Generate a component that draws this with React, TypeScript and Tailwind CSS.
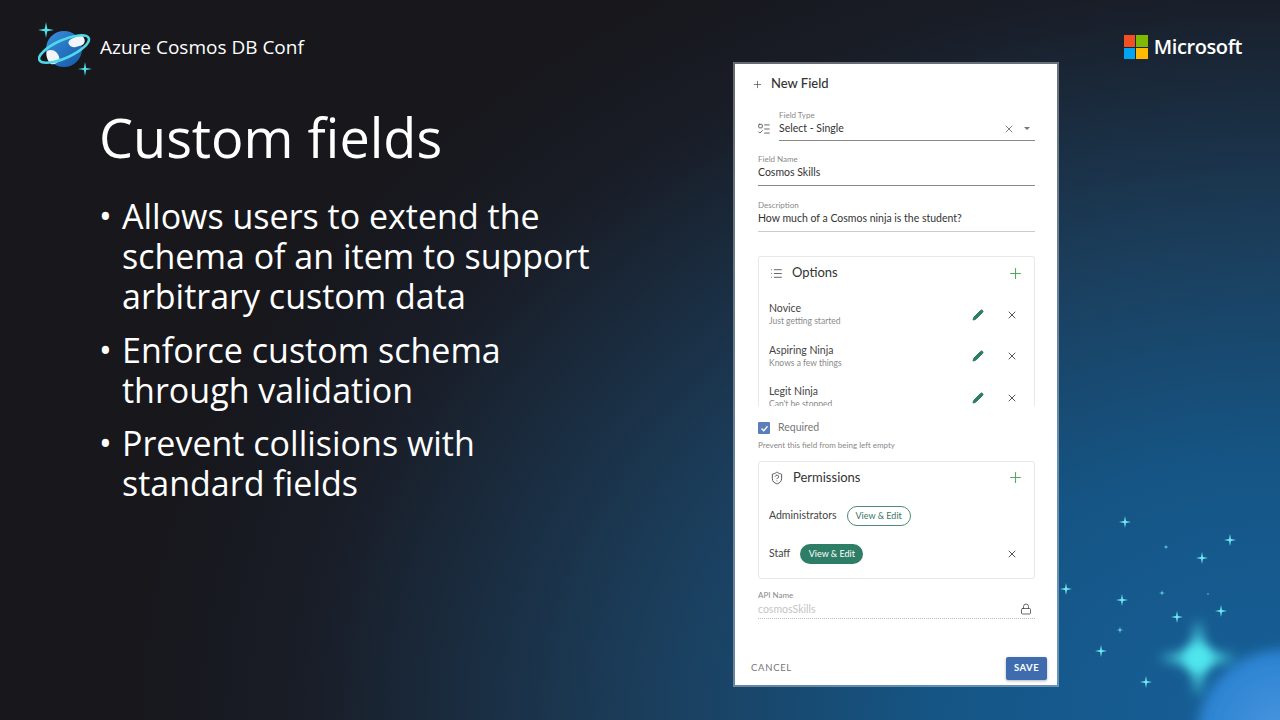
import { Lock, Pencil, Plus, ShieldQuestion, X, ListTodo, List } from "lucide-react"

const star = (x: number, y: number, r: number) => {
    const k = r * 0.16
    return `M${x} ${y - r}L${x + k} ${y - k}L${x + r} ${y}L${x + k} ${y + k}L${x} ${y + r}L${x - k} ${y + k}L${x - r} ${y}L${x - k} ${y - k}Z`
}

const stars = [
    [1125, 522, 6], [1166, 547, 2.5], [1230, 540, 6], [1202, 558, 6], [1066, 589, 6],
    [1122, 600, 6], [1162, 593, 3], [1208, 594, 1.5], [1221, 611, 6], [1177, 617, 6],
    [1120, 630, 3.5], [1101, 651, 6], [1146, 682, 6],
]

const CosmosLogo = () => (
    <svg width="62" height="62" viewBox="0 0 62 62" className="shrink-0">
        <defs>
            <linearGradient id="ball" x1="0" y1="0" x2="1" y2="1">
                <stop offset="0" stopColor="#3a8fdc" />
                <stop offset="1" stopColor="#1558a8" />
            </linearGradient>
        </defs>
        <circle cx="26" cy="27" r="18" fill="url(#ball)" />
        <path d="M21 24c1-6 7-5 9-8 3-3 9-2 10 2 2 3 1 6-1 8-3 2-6 2-9 3-3 1-8-1-9-5z" transform="translate(-2 -2) translate(11 0) scale(.82) translate(5 4)" fill="#f1f4f8" />
        <path d="M9 29c3-2 7-1 9 1 2 2 4 5 3 8-1 3-5 5-8 4-3-2-6-9-4-13z" fill="#f1f4f8" />
        <ellipse cx="26" cy="27" rx="27" ry="9" transform="rotate(-24 26 27)" fill="none" stroke="#4fd8e6" strokeWidth="2.6" />
        <path d={star(8, 8, 8)} fill="#4fe0e8" />
        <path d={star(47, 47, 7)} fill="#4fe0e8" />
    </svg>
)

const MicrosoftLogo = () => (
    <div className="flex items-center gap-[6px]">
        <div className="grid grid-cols-2 gap-[1px] w-[24px] h-[24px]">
            <div className="bg-[#f25022]" />
            <div className="bg-[#7fba00]" />
            <div className="bg-[#00a4ef]" />
            <div className="bg-[#ffb900]" />
        </div>
        <span className="text-[20px] leading-[24px] font-semibold text-white tracking-[-0.4px]">Microsoft</span>
    </div>
)

const Bullet = ({ lines }: { lines: string[] }) => (
    <li className="flex">
        <span className="w-[23px] shrink-0">•</span>
        <span>
            {lines.map((line) => (
                <span key={line} className="block">{line}</span>
            ))}
        </span>
    </li>
)

const Field = ({ label, value, line }: { label: string; value: string; line: string }) => (
    <div className={`border-b ${line} h-[32px] flex flex-col`}>
        <span className="text-[8px] leading-[10px] text-[#8a8a8a]">{label}</span>
        <span className="text-[10.5px] leading-[15px] mt-[1px] text-[#333]">{value}</span>
    </div>
)

const OptionRow = ({ name, hint }: { name: string; hint: string }) => (
    <div className="flex items-center h-[41.5px] pr-[16px]">
        <div className="flex-1 flex flex-col">
            <span className="text-[10.5px] leading-[13px] text-[#444]">{name}</span>
            <span className="text-[8.5px] leading-[12px] text-[#8a8a8a]">{hint}</span>
        </div>
        <Pencil size={12} className="text-[#2e7d66] fill-[#2e7d66] mr-[22px]" />
        <X size={12} className="text-[#555]" />
    </div>
)

const App = () => {
    return (
        <div className="relative w-[1280px] h-[720px] overflow-hidden flex bg-[radial-gradient(ellipse_90%_120%_at_100%_100%,#17609a_0%,#155585_30%,#1b3e5c_55%,#191d27_85%,#17171c_100%)] font-['Open_Sans',sans-serif]">
            {/* estrellas y resplandor */}
            <svg className="absolute inset-0" width="1280" height="720" viewBox="0 0 1280 720">
                <defs>
                    <filter id="glow" x="-50%" y="-50%" width="200%" height="200%">
                        <feGaussianBlur stdDeviation="6" />
                    </filter>
                    <radialGradient id="blob">
                        <stop offset="0" stopColor="#4a96e0" />
                        <stop offset="1" stopColor="#2a82d0" />
                    </radialGradient>
                </defs>
                <circle cx="1282" cy="735" r="85" fill="url(#blob)" filter="url(#glow)" />
                <path d={star(1198, 658, 40)} fill="#4fe6ee" filter="url(#glow)" />
                <circle cx="1198" cy="658" r="14" fill="#4fe6ee" filter="url(#glow)" />
                {stars.map(([x, y, r]) => (
                    <path key={`${x}-${y}`} d={star(x, y, r)} fill="#6fe8f2" />
                ))}
            </svg>

            {/* Diapositiva */}
            <div className="relative w-[735px] shrink-0 text-white">
                <div className="flex items-center pl-[38px] pt-[22px] h-[84px]">
                    <CosmosLogo />
                    <span className="text-[19px] leading-[26px] font-medium -ml-[0px] -mt-[12px]">Azure Cosmos DB Conf</span>
                </div>
                <div className="pl-[99px]">
                    <h1 className="text-[54px] leading-[70px] mt-[18px]">Custom fields</h1>
                    <ul className="text-[34px] leading-[40px] mt-[24px] flex flex-col gap-[13.5px]">
                        <Bullet lines={["Allows users to extend the", "schema of an item to support", "arbitrary custom data"]} />
                        <Bullet lines={["Enforce custom schema", "through validation"]} />
                        <Bullet lines={["Prevent collisions with", "standard fields"]} />
                    </ul>
                </div>
            </div>

            {/* Formulario */}
            <div className="relative mt-[64px] w-[322px] h-[621px] bg-white shadow-[0_0_0_2px_rgba(255,255,255,0.35)] font-['Lato',sans-serif] flex flex-col">
                <div className="flex items-center h-[40px] pl-[17px]">
                    <Plus size={11} strokeWidth={1.5} className="text-[#444]" />
                    <span className="ml-[8px] text-[13px] font-medium text-[#333]">New Field</span>
                </div>
                <div className="pl-[23px] pr-[22px] flex flex-col">
                    <div className="flex mt-[6px]">
                        <ListTodo size={14} strokeWidth={1.5} className="text-[#555] mt-[12px] -ml-[1px] mr-[8px]" />
                        <div className="flex-1 border-b border-[#888] h-[31px] flex flex-col">
                            <span className="text-[8px] leading-[10px] text-[#8a8a8a]">Field Type</span>
                            <div className="flex items-center mt-[1px]">
                                <span className="flex-1 text-[10.5px] leading-[15px] text-[#333]">Select - Single</span>
                                <X size={12} strokeWidth={1.5} className="text-[#555]" />
                                <span className="ml-[9px] mr-[5px] border-x-[3px] border-t-[3px] border-x-transparent border-t-[#777]" />
                            </div>
                        </div>
                    </div>
                    <div className="mt-[13px]">
                        <Field label="Field Name" value="Cosmos Skills" line="border-[#888]" />
                    </div>
                    <div className="mt-[14px]">
                        <Field label="Description" value="How much of a Cosmos ninja is the student?" line="border-[#ccc]" />
                    </div>

                    <div className="mt-[24px] h-[150px] overflow-hidden border-x border-t border-[#e8e8e8] rounded-t-[3px] pl-[10px]">
                        <div className="flex items-center h-[32px] pr-[10px]">
                            <List size={13} strokeWidth={1.5} className="text-[#444] ml-[1px]" />
                            <span className="ml-[9px] text-[13px] text-[#333]">Options</span>
                            <Plus size={17} strokeWidth={1.6} className="text-[#5aa85e] ml-auto" />
                        </div>
                        <div className="mt-[5px]">
                            <OptionRow name="Novice" hint="Just getting started" />
                            <OptionRow name="Aspiring Ninja" hint="Knows a few things" />
                            <OptionRow name="Legit Ninja" hint="Can't be stopped" />
                        </div>
                    </div>

                    <div className="flex items-center mt-[16px] h-[12px]">
                        <span className="w-[12px] h-[12px] rounded-[1px] bg-[#5b7fb8] flex items-center justify-center">
                            <svg width="9" height="9" viewBox="0 0 24 24" fill="none" stroke="white" strokeWidth="3.5">
                                <path d="M4 12l6 6L20 6" />
                            </svg>
                        </span>
                        <span className="ml-[8px] text-[10.5px] text-[#777]">Required</span>
                    </div>
                    <span className="text-[8px] leading-[10px] mt-[6px] text-[#888]">Prevent this field from being left empty</span>

                    <div className="mt-[11px] h-[118px] border border-[#e8e8e8] rounded-[3px] pl-[10px] pr-[16px]">
                        <div className="flex items-center h-[31px] -mr-[6px]">
                            <ShieldQuestion size={14} strokeWidth={1.5} className="text-[#444] ml-[1px]" />
                            <span className="ml-[9px] text-[13px] text-[#333]">Permissions</span>
                            <Plus size={17} strokeWidth={1.6} className="text-[#5aa85e] ml-auto" />
                        </div>
                        <div className="flex items-center mt-[13px] h-[20px]">
                            <span className="text-[10.5px] text-[#444]">Administrators</span>
                            <span className="ml-[10px] w-[64px] h-[20px] flex items-center justify-center rounded-full border border-[#4d8a78] text-[9px] text-[#3c7564]">View &amp; Edit</span>
                        </div>
                        <div className="flex items-center mt-[18px] h-[20px]">
                            <span className="text-[10.5px] text-[#444]">Staff</span>
                            <span className="ml-[10px] w-[63px] h-[20px] flex items-center justify-center rounded-full bg-[#2e7d66] text-[9px] text-white">View &amp; Edit</span>
                            <X size={12} className="text-[#555] ml-auto" />
                        </div>
                    </div>

                    <div className="mt-[11px] border-b border-dotted border-[#bbb] h-[29px] flex flex-col relative">
                        <span className="text-[8px] leading-[10px] text-[#888]">API Name</span>
                        <div className="flex items-center justify-between pr-[3px] mt-[2px]">
                            <span className="text-[10.5px] leading-[14px] text-[#c4c4c4]">cosmosSkills</span>
                            <Lock size={12} strokeWidth={1.6} className="text-[#444]" />
                        </div>
                    </div>
                </div>
                <div className="mt-auto flex items-center justify-between pl-[16px] pr-[10px] pb-[5px]">
                    <span className="text-[9.5px] tracking-[0.7px] text-[#777]">CANCEL</span>
                    <span className="w-[41px] h-[23px] rounded-[2px] bg-[#3f6cae] shadow-[0_1px_3px_rgba(0,0,0,0.3)] flex items-center justify-center text-[9.5px] font-bold tracking-[0.5px] text-white">SAVE</span>
                </div>
            </div>

            <div className="relative flex-1 flex justify-end pt-[35px] pr-[38px] items-start">
                <MicrosoftLogo />
            </div>
        </div>
    )
}

export default App
